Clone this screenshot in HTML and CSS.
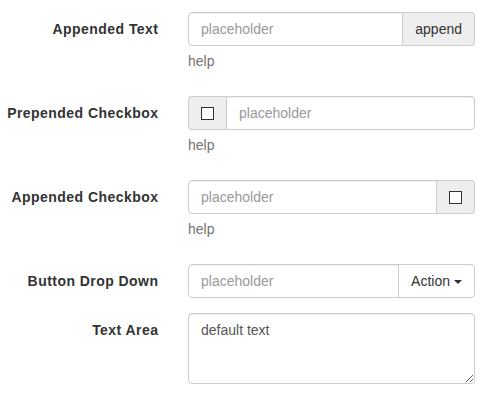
FILE: index.html
```html
<!DOCTYPE html>
<html>
<head>
<meta charset="utf-8">
<link rel="stylesheet" href="styles.css">
</head>
<body>
<form class="form">
  <div class="form-group">
    <label class="label">Appended Text</label>
    <div class="control">
      <div class="input-group">
        <input class="input" type="text" placeholder="placeholder">
        <span class="addon addon-right">append</span>
      </div>
      <p class="help">help</p>
    </div>
  </div>
  <div class="form-group">
    <label class="label">Prepended Checkbox</label>
    <div class="control">
      <div class="input-group">
        <span class="addon addon-left"><span class="check"></span></span>
        <input class="input input-after" type="text" placeholder="placeholder">
      </div>
      <p class="help">help</p>
    </div>
  </div>
  <div class="form-group">
    <label class="label">Appended Checkbox</label>
    <div class="control">
      <div class="input-group">
        <input class="input" type="text" placeholder="placeholder">
        <span class="addon addon-right"><span class="check"></span></span>
      </div>
      <p class="help">help</p>
    </div>
  </div>
  <div class="form-group">
    <label class="label">Button Drop Down</label>
    <div class="control">
      <div class="input-group">
        <input class="input" type="text" placeholder="placeholder">
        <button type="button" class="btn">Action <span class="caret"></span></button>
      </div>
    </div>
  </div>
  <div class="form-group">
    <label class="label">Text Area</label>
    <div class="control">
      <textarea class="textarea">default text</textarea>
    </div>
  </div>
</form>
</body>
</html>
```
FILE: styles.css
```css
* { box-sizing: border-box; }
body {
  margin: 0;
  background: #fff;
  font-family: "Liberation Sans", Arial, sans-serif;
  font-size: 14px;
  line-height: 20px;
  color: #333;
}
.form {
  padding-top: 12px;
}
.form-group {
  display: grid;
  grid-template-columns: 158px 287px;
  column-gap: 30px;
  margin-bottom: 15px;
}
.label {
  text-align: right;
  font-weight: bold;
  padding-top: 7px;
  white-space: nowrap;
  letter-spacing: 0.45px;
  margin-right: -0.45px;
}
.control { min-width: 0; }
.input-group {
  display: flex;
  height: 34px;
}
.input {
  flex: 1;
  min-width: 0;
  height: 34px;
  padding: 6px 12px;
  border: 1px solid #ccc;
  border-radius: 4px 0 0 4px;
  font-family: inherit;
  font-size: 14px;
  color: #555;
  box-shadow: inset 0 1px 1px rgba(0,0,0,.075);
  outline: none;
}
.input::placeholder { color: #999; }
.input-after {
  border-radius: 0 4px 4px 0;
}
.addon {
  display: flex;
  align-items: center;
  justify-content: center;
  padding: 6px 12px;
  background: #eee;
  border: 1px solid #ccc;
  color: #333;
  font-size: 14px;
}
.addon-right {
  border-left: 0;
  border-radius: 0 4px 4px 0;
}
.addon-left {
  border-right: 0;
  border-radius: 4px 0 0 4px;
}
.check {
  display: block;
  width: 13px;
  height: 13px;
  border: 1px solid #333;
  background: #fff;
}
.btn {
  margin-left: -1px;
  height: 34px;
  padding: 6px 12px;
  background: #fff;
  border: 1px solid #ccc;
  border-radius: 0 4px 4px 0;
  font-family: inherit;
  font-size: 14px;
  color: #333;
  display: flex;
  align-items: center;
}
.caret {
  display: inline-block;
  width: 0;
  height: 0;
  margin-left: 4px;
  border-top: 4px solid #333;
  border-left: 4px solid transparent;
  border-right: 4px solid transparent;
  margin-top: 2px;
}
.help {
  margin: 5px 0 10px;
  color: #737373;
}
.textarea {
  display: block;
  width: 100%;
  height: 71px;
  padding: 6px 12px;
  border: 1px solid #ccc;
  border-radius: 4px;
  font-family: inherit;
  font-size: 14px;
  line-height: 20px;
  color: #555;
  box-shadow: inset 0 1px 1px rgba(0,0,0,.075);
  outline: none;
}
```
